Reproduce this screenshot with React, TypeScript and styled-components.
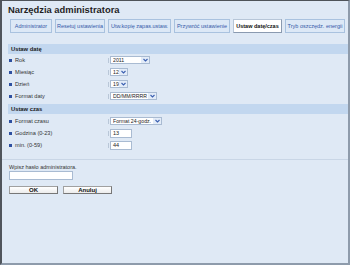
import React from "react";
import styled, { createGlobalStyle } from "styled-components";

const Global = createGlobalStyle`
  html, body { margin: 0; padding: 0; }
  body { font-family: "Liberation Sans", Arial, sans-serif; background: #dfe9f5; }
`;

const Frame = styled.div`
  box-sizing: border-box;
  width: 350px;
  height: 265px;
  background: #dfe9f5;
  border-top: 1px solid #4e5359;
  border-left: 2px solid #50555c;
  border-right: 2px solid #8e9bab;
  border-bottom: 2px solid #8e9bab;
  display: flex;
  flex-direction: column;
  overflow: hidden;
`;

const Title = styled.h1`
  margin: 3px 0 0 6px;
  font-size: 9.4px;
  line-height: 11px;
  font-weight: bold;
  color: #1f1f1f;
`;

const Tabs = styled.div`
  display: flex;
  gap: 3px;
  margin: 4px 0 0 8px;
`;

const Tab = styled.div<{ $active?: boolean; $w: number }>`
  width: ${(p) => p.$w}px;
  height: 14px;
  box-sizing: border-box;
  display: flex;
  align-items: center;
  justify-content: center;
  font-size: 5.5px;
  white-space: nowrap;
  border: 1px solid ${(p) => (p.$active ? "#b7c6d8" : "#a9c2df")};
  border-bottom-color: ${(p) => (p.$active ? "#8a9ab0" : "#a9c2df")};
  border-right-color: ${(p) => (p.$active ? "#8a9ab0" : "#a9c2df")};
  background: ${(p) => (p.$active ? "#ffffff" : "#dce8f6")};
  color: ${(p) => (p.$active ? "#111" : "#3559a8")};
  font-weight: ${(p) => (p.$active ? "bold" : "normal")};
`;

const Band = styled.div<{ $top: number }>`
  margin: ${(p) => p.$top}px 0 0 6px;
  height: 10px;
  background: #c2d7ef;
  font-size: 5.8px;
  font-weight: bold;
  color: #1a1a1a;
  display: flex;
  align-items: center;
  padding-left: 3px;
`;

const Rows = styled.div<{ $top: number }>`
  display: flex;
  flex-direction: column;
  margin: ${(p) => p.$top}px 0 0 7px;
`;

const Row = styled.div`
  height: 12px;
  display: flex;
  align-items: center;
`;

const Label = styled.div`
  width: 99px;
  display: flex;
  align-items: center;
  gap: 3px;
  font-size: 5.6px;
  color: #333;
`;

const Bullet = styled.span`
  width: 3px;
  height: 3px;
  background: #2d4fa0;
  display: inline-block;
`;

const Tick = styled.span`
  width: 1px;
  height: 5px;
  background: #b9c7d8;
  margin-right: 1px;
`;

const Select = styled.div<{ $w: number }>`
  width: ${(p) => p.$w}px;
  height: 8px;
  box-sizing: border-box;
  background: #fff;
  border: 1px solid #a9bbd2;
  display: flex;
  align-items: center;
  font-size: 5.2px;
  color: #222;
  padding-left: 2px;
`;

const SelText = styled.span`
  flex: 1;
  white-space: nowrap;
  overflow: hidden;
`;

const Arrow = styled.span`
  width: 8px;
  height: 6px;
  display: flex;
  align-items: center;
  justify-content: center;
  background: #e3ecf8;
`;

const TextBox = styled.div<{ $w: number }>`
  width: ${(p) => p.$w}px;
  height: 9px;
  box-sizing: border-box;
  background: #fff;
  border: 1px solid #a9bbd2;
  font-size: 5.5px;
  color: #222;
  padding-left: 2px;
  display: flex;
  align-items: center;
`;

const Sep = styled.div`
  height: 1px;
  background: #c9d6e6;
  margin-top: 8px;
`;

const PassLabel = styled.div`
  margin: 4px 0 0 7px;
  font-size: 5.5px;
  line-height: 7px;
  color: #333;
`;

const PassBox = styled.div`
  margin: 0 0 0 7px;
  width: 64px;
  height: 9px;
  box-sizing: border-box;
  background: #fff;
  border: 1px solid #a9bbd2;
`;

const Buttons = styled.div`
  display: flex;
  gap: 5px;
  margin: 6px 0 0 7px;
`;

const Button = styled.div`
  width: 49px;
  height: 8px;
  box-sizing: border-box;
  background: linear-gradient(#ffffff, #ececec);
  border: 1px solid #a0a0a0;
  border-right-color: #777;
  border-bottom-color: #777;
  font-size: 6px;
  font-weight: bold;
  color: #111;
  display: flex;
  align-items: center;
  justify-content: center;
`;

const Chevron = () => (
  <svg width="5" height="4" viewBox="0 0 5 4">
    <path d="M0.5 1 L2.5 3 L4.5 1" stroke="#3a5fb0" strokeWidth="1.1" fill="none" />
  </svg>
);

const Sel = ({ w, v }: { w: number; v: string }) => (
  <>
    <Tick />
    <Select $w={w}>
      <SelText>{v}</SelText>
      <Arrow>
        <Chevron />
      </Arrow>
    </Select>
  </>
);

const Field = ({ label, children }: { label: string; children: React.ReactNode }) => (
  <Row>
    <Label>
      <Bullet />
      {label}
    </Label>
    {children}
  </Row>
);

const tabs: { t: string; w: number; active?: boolean }[] = [
  { t: "Administrator", w: 42 },
  { t: "Resetuj ustawienia", w: 50 },
  { t: "Utw.kopię zapas.ustaw.", w: 63 },
  { t: "Przywróć ustawienie", w: 56 },
  { t: "Ustaw datę/czas", w: 49, active: true },
  { t: "Tryb oszczędz. energii", w: 60 },
];

export default function App() {
  return (
    <>
      <Global />
      <Frame>
        <Title>Narzędzia administratora</Title>
        <Tabs>
          {tabs.map((t) => (
            <Tab key={t.t} $w={t.w} $active={t.active}>
              {t.t}
            </Tab>
          ))}
        </Tabs>
        <Band $top={11}>Ustaw datę</Band>
        <Rows $top={0}>
          <Field label="Rok">
            <Sel w={40} v="2011" />
          </Field>
          <Field label="Miesiąc">
            <Sel w={18} v="12" />
          </Field>
          <Field label="Dzień">
            <Sel w={18} v="19" />
          </Field>
          <Field label="Format daty">
            <Sel w={47} v="DD/MM/RRRR" />
          </Field>
        </Rows>
        <Band $top={2}>Ustaw czas</Band>
        <Rows $top={1}>
          <Field label="Format czasu">
            <Sel w={52} v="Format 24-godz." />
          </Field>
          <Field label="Godzina (0-23)">
            <Tick />
            <TextBox $w={22}>13</TextBox>
          </Field>
          <Field label="min. (0-59)">
            <Tick />
            <TextBox $w={22}>44</TextBox>
          </Field>
        </Rows>
        <Sep />
        <PassLabel>Wpisz hasło administratora.</PassLabel>
        <PassBox />
        <Buttons>
          <Button>OK</Button>
          <Button>Anuluj</Button>
        </Buttons>
      </Frame>
    </>
  );
}
